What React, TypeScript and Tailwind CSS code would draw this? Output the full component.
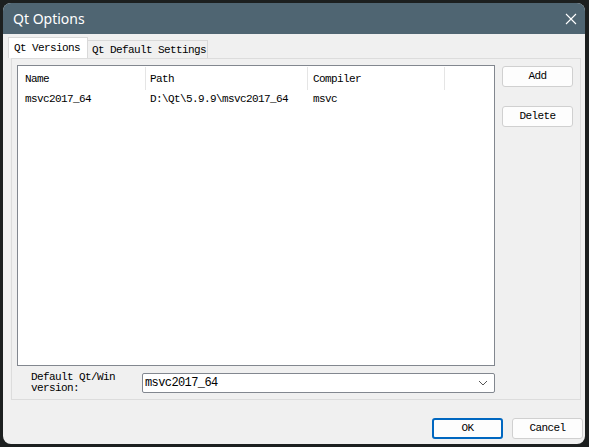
import React from "react";

const mono = "font-['Liberation_Mono','DejaVu_Sans_Mono',monospace] text-[11px] tracking-[-0.6px] text-[#000]";

function Btn({ label, primary }: { label: string; primary?: boolean }) {
  return (
    <button
      className={`w-[71px] h-[21px] rounded-[3px] bg-[#fdfdfd] flex items-center justify-center ${mono} ${
        primary ? "border-2 border-[#0067c0]" : "border border-[#d0d0d0]"
      }`}
    >
      {label}
    </button>
  );
}

export default function App() {
  const rows = [{ name: "msvc2017_64", path: "D:\\Qt\\5.9.9\\msvc2017_64", compiler: "msvc" }];

  return (
    <div className="w-[589px] h-[447px] bg-[#1c1f1f] pt-[3px] pl-[3px] overflow-hidden">
      <div className="w-[582px] h-[441px] rounded-[8px] overflow-hidden flex flex-col bg-[#f0f0f0]">
        {/* title bar */}
        <div className="h-[31px] bg-[#4f6572] flex items-center justify-between pl-[10px] pr-[6px]">
          <span className="font-['Noto_Sans',sans-serif] text-[14px] text-white">Qt Options</span>
          <svg width="14" height="14" viewBox="0 0 14 14" className="mr-[1px]">
            <path d="M2 2 L12 12 M12 2 L2 12" stroke="#fff" strokeWidth="1.1" />
          </svg>
        </div>

        {/* tabs */}
        <div className="flex items-end ml-[5px] mt-[4px] h-[20px]">
          <div className={`h-[21px] w-[80px] bg-white border border-[#d9d9d9] border-b-0 flex items-center pl-[5px] pt-[1px] relative z-10 ${mono}`}>
            Qt Versions
          </div>
          <div className={`h-[18px] w-[120px] bg-[#f0f0f0] border border-[#d9d9d9] border-l-0 border-b-0 flex items-center pl-[4px] pt-[1px] ${mono}`}>
            Qt Default Settings
          </div>
        </div>

        {/* pane */}
        <div className="ml-[8px] w-[570px] h-[342px] border border-[#dcdcdc] bg-[#f0f0f0] flex flex-col pt-[6px] pl-[5px]">
          <div className="flex gap-[7px]">
            <div className="w-[478px] h-[301px] bg-white border border-[#82878f]">
              <div className={`flex h-[24px] items-center ${mono}`}>
                <div className="w-[128px] h-[23px] flex items-center pl-[7px] pt-[2px] border-r border-[#e5e5e5]">Name</div>
                <div className="w-[162px] h-[23px] flex items-center pl-[4px] pt-[2px] border-r border-[#e5e5e5]">Path</div>
                <div className="w-[137px] h-[23px] flex items-center pl-[5px] pt-[2px] border-r border-[#e5e5e5]">Compiler</div>
              </div>
              {rows.map((r, i) => (
                <div key={i} className={`flex h-[19px] items-center ${mono}`}>
                  <div className="w-[128px] pl-[7px]">{r.name}</div>
                  <div className="w-[163px] pl-[4px]">{r.path}</div>
                  <div className="pl-[4px]">{r.compiler}</div>
                </div>
              ))}
            </div>
            <div className="flex flex-col gap-[19px] pt-[1px]">
              <Btn label="Add" />
              <Btn label="Delete" />
            </div>
          </div>

          <div className="flex items-center mt-[6px] w-[478px]">
            <div className={`w-[125px] pl-[14px] leading-[11px] ${mono}`}>
              Default Qt/Win
              <br />
              version:
            </div>
            <div className={`flex-1 h-[20px] bg-white border border-[#82878f] rounded-[2px] flex items-center justify-between pl-[2px] pr-[6px] ${mono}`}>
              <span className="text-[12px]">msvc2017_64</span>
              <svg width="10" height="6" viewBox="0 0 10 6">
                <path d="M1 1 L5 5 L9 1" stroke="#555" strokeWidth="1" fill="none" />
              </svg>
            </div>
          </div>
        </div>

        {/* footer */}
        <div className="flex justify-end gap-[9px] pr-[2px] mt-[18px]">
          <Btn label="OK" primary />
          <Btn label="Cancel" />
        </div>
      </div>
    </div>
  );
}
